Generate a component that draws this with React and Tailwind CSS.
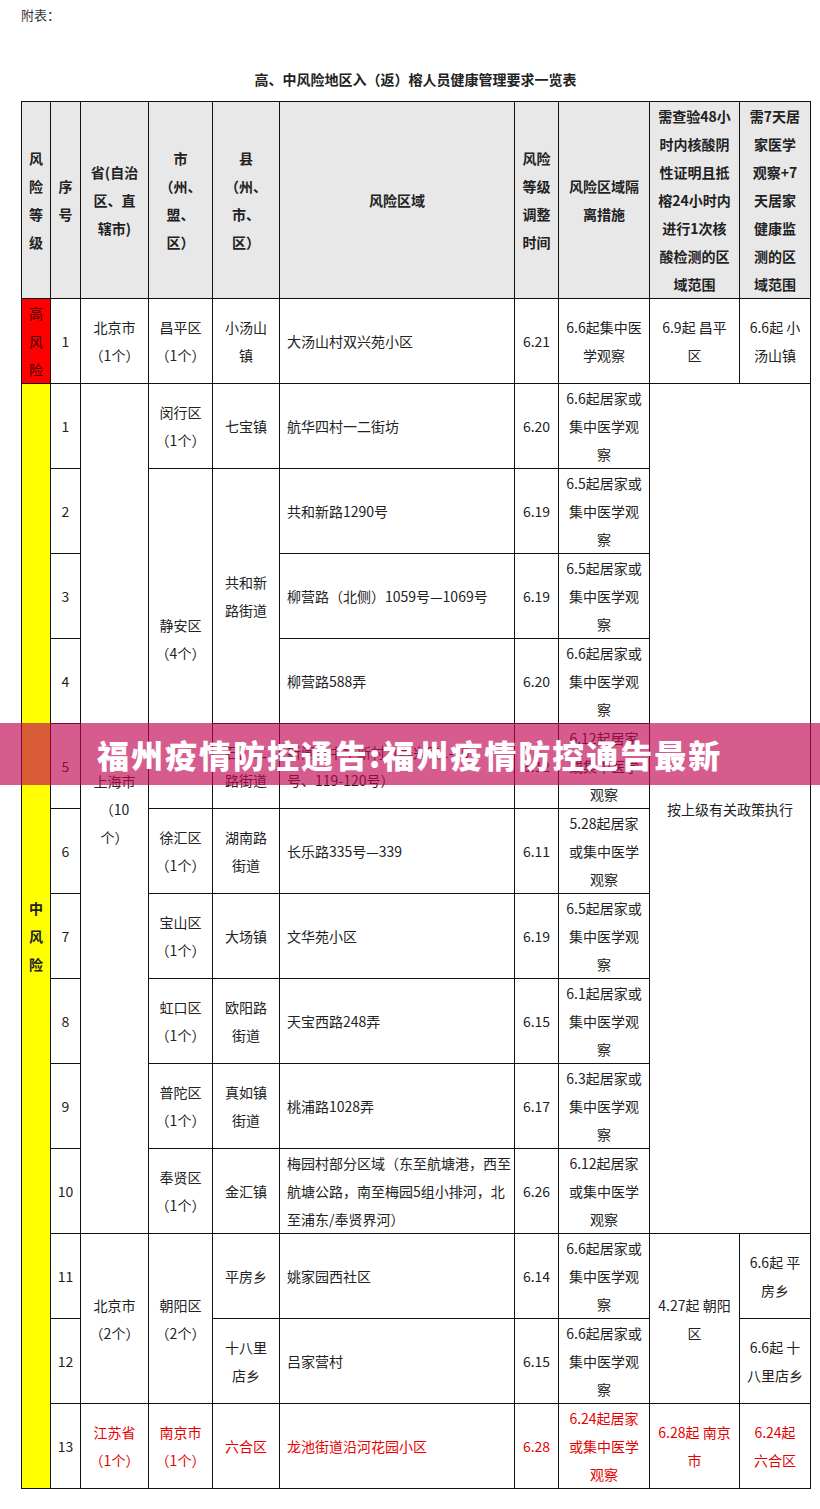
const cell = 'border border-[#111] text-center align-middle p-0 whitespace-nowrap'
const area = 'border border-[#111] text-left align-middle pl-[7px] pr-0 py-0 whitespace-nowrap'

function Lines({ text }) {
  return text.split('|').map((t, i) => (
    <span key={i} className="block">
      {t}
    </span>
  ))
}

function C({ t, className = '', ...rest }) {
  return (
    <td className={`${cell} ${className}`} {...rest}>
      <Lines text={t} />
    </td>
  )
}

function A({ t, className = '' }) {
  return (
    <td className={`${area} ${className}`}>
      <Lines text={t} />
    </td>
  )
}

function H({ t, className = '' }) {
  return (
    <th className={`${cell} font-bold ${className}`}>
      <Lines text={t} />
    </th>
  )
}

// rows of the Shanghai block after the first one
const shanghai = [
  { n: '2', area: '共和新路1290号', d: '6.19', m: '6.5起居家或|集中医学观|察' },
  { n: '3', area: '柳营路（北侧）1059号—1069号', d: '6.19', m: '6.5起居家或|集中医学观|察' },
  { n: '4', area: '柳营路588弄', d: '6.20', m: '6.6起居家或|集中医学观|察' },
  { n: '5', county: '石门二|路街道', area: '新闸路中华新村（泰兴路1-10|号、119-120号）', d: '6.12', m: '6.12起居家|或集中医学|观察' },
  { n: '6', city: '徐汇区|（1个）', county: '湖南路|街道', area: '长乐路335号—339', d: '6.11', m: '5.28起居家|或集中医学|观察' },
  { n: '7', city: '宝山区|（1个）', county: '大场镇', area: '文华苑小区', d: '6.19', m: '6.5起居家或|集中医学观|察' },
  { n: '8', city: '虹口区|（1个）', county: '欧阳路|街道', area: '天宝西路248弄', d: '6.15', m: '6.1起居家或|集中医学观|察' },
  { n: '9', city: '普陀区|（1个）', county: '真如镇|街道', area: '桃浦路1028弄', d: '6.17', m: '6.3起居家或|集中医学观|察' },
  { n: '10', city: '奉贤区|（1个）', county: '金汇镇', area: '梅园村部分区域（东至航塘港，西至|航塘公路，南至梅园5组小排河，北|至浦东/奉贤界河）', d: '6.26', m: '6.12起居家|或集中医学|观察' },
]

export default function App() {
  return (
    <div className="relative w-[820px] h-[1509px] bg-white text-[#222] font-['Noto_Sans_CJK_SC','Liberation_Sans',sans-serif]">
      <div className="pl-[21px] pt-[6px]">
        <p className="text-[13px] leading-[18px] text-[#333]">附表：</p>
        <h1 className="w-[789px] mt-[45px] text-center text-[14px] leading-[20px] font-bold">
          高、中风险地区入（返）榕人员健康管理要求一览表
        </h1>

        <table className="mt-[12px] w-[789px] table-fixed border-collapse text-[14px] leading-[28px]">
          <colgroup>
            <col className="w-[29px]" />
            <col className="w-[30px]" />
            <col className="w-[68px]" />
            <col className="w-[64px]" />
            <col className="w-[67px]" />
            <col className="w-[235px]" />
            <col className="w-[44px]" />
            <col className="w-[91px]" />
            <col className="w-[90px]" />
            <col className="w-[71px]" />
          </colgroup>
          <thead>
            <tr className="h-[197px] bg-[#e8e8e8]">
              <H t="风|险|等|级" />
              <H t="序|号" />
              <H t="省(自治|区、直|辖市)" />
              <H t="市|（州、|盟、|区）" />
              <H t="县|（州、|市、|区）" />
              <H t="风险区域" />
              <H t="风险|等级|调整|时间" />
              <H t="风险区域隔|离措施" />
              <H t="需查验48小|时内核酸阴|性证明且抵|榕24小时内|进行1次核|酸检测的区|域范围" />
              <H t="需7天居|家医学|观察+7|天居家|健康监|测的区|域范围" />
            </tr>
          </thead>
          <tbody>
            <tr className="h-[85px]">
              <C t="高|风|险" className="bg-[#ff0000] text-[#3a0000]" />
              <C t="1" />
              <C t="北京市|（1个）" />
              <C t="昌平区|（1个）" />
              <C t="小汤山|镇" />
              <A t="大汤山村双兴苑小区" />
              <C t="6.21" />
              <C t="6.6起集中医|学观察" />
              <C t="6.9起 昌平|区" />
              <C t="6.6起 小|汤山镇" />
            </tr>

            <tr className="h-[85px]">
              <C t="中|风|险" rowSpan={13} className="bg-[#ffff00] font-bold" />
              <C t="1" />
              <C t="上海市|（10|个）" rowSpan={10} />
              <C t="闵行区|（1个）" />
              <C t="七宝镇" />
              <A t="航华四村一二街坊" />
              <C t="6.20" />
              <C t="6.6起居家或|集中医学观|察" />
              <C t="按上级有关政策执行" rowSpan={10} colSpan={2} />
            </tr>

            {shanghai.map((r) => (
              <tr key={r.n} className="h-[85px]">
                <C t={r.n} />
                {r.n === '2' && <C t="静安区|（4个）" rowSpan={4} />}
                {r.city && <C t={r.city} />}
                {r.n === '2' && <C t="共和新|路街道" rowSpan={3} />}
                {r.county && <C t={r.county} />}
                <A t={r.area} />
                <C t={r.d} />
                <C t={r.m} />
              </tr>
            ))}

            <tr className="h-[85px]">
              <C t="11" />
              <C t="北京市|（2个）" rowSpan={2} />
              <C t="朝阳区|（2个）" rowSpan={2} />
              <C t="平房乡" />
              <A t="姚家园西社区" />
              <C t="6.14" />
              <C t="6.6起居家或|集中医学观|察" />
              <C t="4.27起 朝阳|区" rowSpan={2} />
              <C t="6.6起 平|房乡" />
            </tr>
            <tr className="h-[85px]">
              <C t="12" />
              <C t="十八里|店乡" />
              <A t="吕家营村" />
              <C t="6.15" />
              <C t="6.6起居家或|集中医学观|察" />
              <C t="6.6起 十|八里店乡" />
            </tr>
            <tr className="h-[85px]">
              <C t="13" />
              <C t="江苏省|（1个）" className="text-[#e60000]" />
              <C t="南京市|（1个）" className="text-[#e60000]" />
              <C t="六合区" className="text-[#e60000]" />
              <A t="龙池街道沿河花园小区" className="text-[#e60000]" />
              <C t="6.28" className="text-[#e60000]" />
              <C t="6.24起居家|或集中医学|观察" className="text-[#e60000]" />
              <C t="6.28起 南京|市" className="text-[#e60000]" />
              <C t="6.24起|六合区" className="text-[#e60000]" />
            </tr>
          </tbody>
        </table>
      </div>

      {/* title banner over the table */}
      <div className="absolute left-0 top-[723px] w-full h-[62px] flex items-center bg-[rgba(194,5,81,0.65)]">
        <span className="pl-[97px] text-white text-[32px] leading-none font-black tracking-[2px] whitespace-nowrap">
          福州疫情防控通告:福州疫情防控通告最新
        </span>
      </div>
    </div>
  )
}
